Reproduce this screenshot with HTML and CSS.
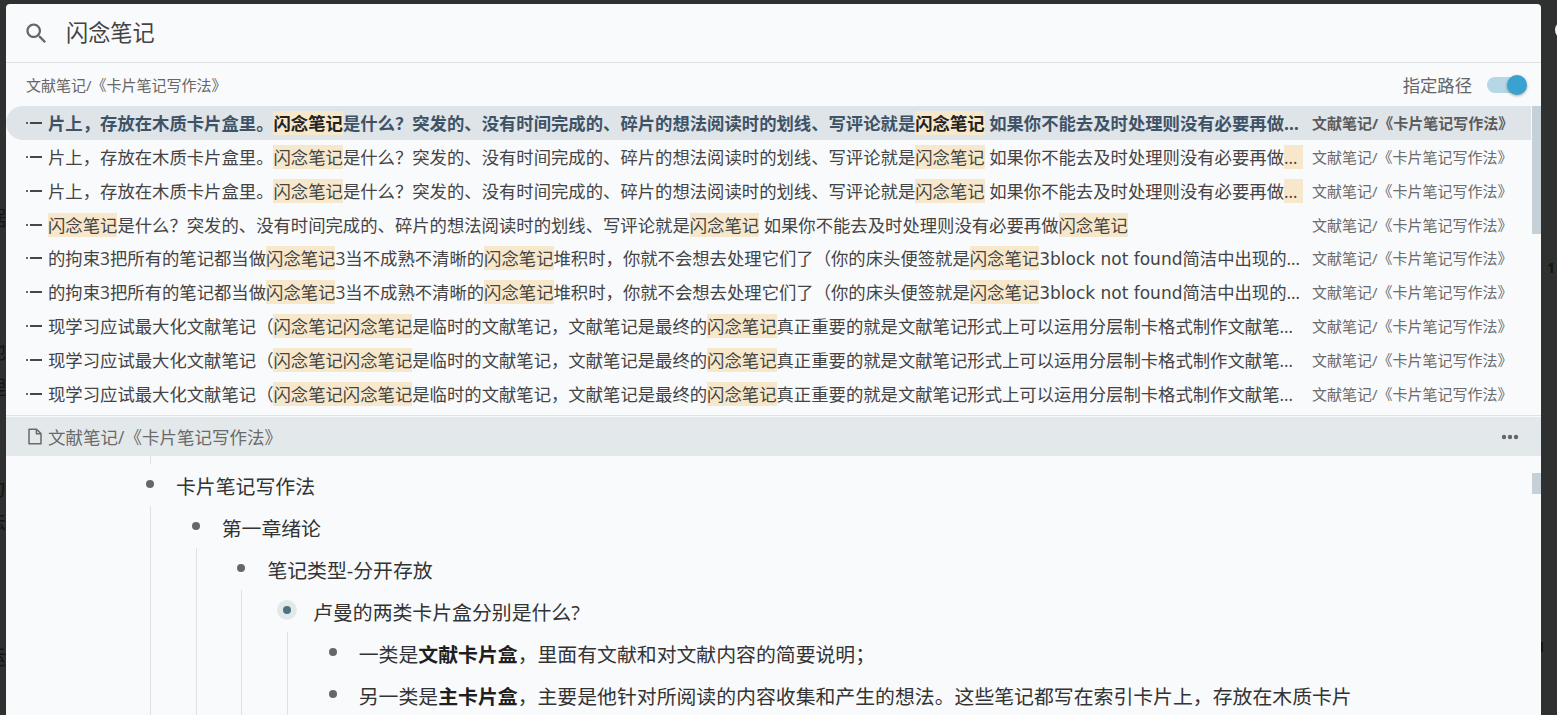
FILE: index.html
```html
<!DOCTYPE html>
<html lang="zh-CN">
<head>
<meta charset="utf-8">
<title>闪念笔记</title>
<link rel="stylesheet" href="styles.css">
</head>
<body>
<div class="backdrop" aria-hidden="true">
  <span class="bg-glyph g1">据</span>
  <span class="bg-glyph g2">他</span>
  <span class="bg-glyph g3">理</span>
  <span class="bg-glyph g4">力</span>
  <span class="bg-glyph g5">法</span>
  <span class="bg-glyph g6">运</span>
  <span class="bg-one">1</span>
  <span class="bg-block"></span>
  <span class="bg-circle"></span>
</div>
<main class="dialog">
  <header class="search">
    <svg class="search-icon" viewBox="0 0 24 24"><path d="M15.5 14h-.79l-.28-.27C15.41 12.59 16 11.11 16 9.5 16 5.91 13.09 3 9.5 3S3 5.91 3 9.5 5.91 16 9.5 16c1.61 0 3.09-.59 4.23-1.57l.27.28v.79l5 4.99L20.49 19l-4.99-5zm-6 0C7.01 14 5 11.99 5 9.5S7.01 5 9.5 5 14 7.01 14 9.5 11.99 14 9.5 14z"/></svg>
    <div class="search-input">闪念笔记</div>
  </header>

  <div class="filter">
    <span class="filter-path">文献笔记/《卡片笔记写作法》</span>
    <span class="filter-label">指定路径</span>
    <span class="switch"><span class="switch-knob"></span></span>
  </div>

  <div class="results">
    <ul class="list">
      <li class="item is-focus">
        <svg class="item-icon" viewBox="0 0 16 8"><circle cx="1" cy="4" r="1"/><rect x="4" y="3.1" width="12" height="1.8"/></svg>
        <span class="item-text">片上，存放在木质卡片盒里。<mark>闪念笔记</mark>是什么？突发的、没有时间完成的、碎片的想法阅读时的划线、写评论就是<mark>闪念笔记</mark> 如果你不能去及时处理则没有必要再做闪念笔记</span>
        <span class="item-path">文献笔记/《卡片笔记写作法》</span>
      </li>
      <li class="item">
        <svg class="item-icon" viewBox="0 0 16 8"><circle cx="1" cy="4" r="1"/><rect x="4" y="3.1" width="12" height="1.8"/></svg>
        <span class="item-text">片上，存放在木质卡片盒里。<mark>闪念笔记</mark>是什么？突发的、没有时间完成的、碎片的想法阅读时的划线、写评论就是<mark>闪念笔记</mark> 如果你不能去及时处理则没有必要再做<mark>闪念笔记</mark></span>
        <span class="item-path">文献笔记/《卡片笔记写作法》</span>
      </li>
      <li class="item">
        <svg class="item-icon" viewBox="0 0 16 8"><circle cx="1" cy="4" r="1"/><rect x="4" y="3.1" width="12" height="1.8"/></svg>
        <span class="item-text">片上，存放在木质卡片盒里。<mark>闪念笔记</mark>是什么？突发的、没有时间完成的、碎片的想法阅读时的划线、写评论就是<mark>闪念笔记</mark> 如果你不能去及时处理则没有必要再做<mark>闪念笔记</mark></span>
        <span class="item-path">文献笔记/《卡片笔记写作法》</span>
      </li>
      <li class="item">
        <svg class="item-icon" viewBox="0 0 16 8"><circle cx="1" cy="4" r="1"/><rect x="4" y="3.1" width="12" height="1.8"/></svg>
        <span class="item-text"><mark>闪念笔记</mark>是什么？突发的、没有时间完成的、碎片的想法阅读时的划线、写评论就是<mark>闪念笔记</mark> 如果你不能去及时处理则没有必要再做<mark>闪念笔记</mark></span>
        <span class="item-path">文献笔记/《卡片笔记写作法》</span>
      </li>
      <li class="item">
        <svg class="item-icon" viewBox="0 0 16 8"><circle cx="1" cy="4" r="1"/><rect x="4" y="3.1" width="12" height="1.8"/></svg>
        <span class="item-text">的拘束3把所有的笔记都当做<mark>闪念笔记</mark>3当不成熟不清晰的<mark>闪念笔记</mark>堆积时，你就不会想去处理它们了（你的床头便签就是<mark>闪念笔记</mark><span class="latin">3block not found</span>简洁中出现的问题和想法</span>
        <span class="item-path">文献笔记/《卡片笔记写作法》</span>
      </li>
      <li class="item">
        <svg class="item-icon" viewBox="0 0 16 8"><circle cx="1" cy="4" r="1"/><rect x="4" y="3.1" width="12" height="1.8"/></svg>
        <span class="item-text">的拘束3把所有的笔记都当做<mark>闪念笔记</mark>3当不成熟不清晰的<mark>闪念笔记</mark>堆积时，你就不会想去处理它们了（你的床头便签就是<mark>闪念笔记</mark><span class="latin">3block not found</span>简洁中出现的问题和想法</span>
        <span class="item-path">文献笔记/《卡片笔记写作法》</span>
      </li>
      <li class="item">
        <svg class="item-icon" viewBox="0 0 16 8"><circle cx="1" cy="4" r="1"/><rect x="4" y="3.1" width="12" height="1.8"/></svg>
        <span class="item-text">现学习应试最大化文献笔记（<mark>闪念笔记闪念笔记</mark>是临时的文献笔记，文献笔记是最终的<mark>闪念笔记</mark>真正重要的就是文献笔记形式上可以运用分层制卡格式制作文献笔记内容</span>
        <span class="item-path">文献笔记/《卡片笔记写作法》</span>
      </li>
      <li class="item">
        <svg class="item-icon" viewBox="0 0 16 8"><circle cx="1" cy="4" r="1"/><rect x="4" y="3.1" width="12" height="1.8"/></svg>
        <span class="item-text">现学习应试最大化文献笔记（<mark>闪念笔记闪念笔记</mark>是临时的文献笔记，文献笔记是最终的<mark>闪念笔记</mark>真正重要的就是文献笔记形式上可以运用分层制卡格式制作文献笔记内容</span>
        <span class="item-path">文献笔记/《卡片笔记写作法》</span>
      </li>
      <li class="item">
        <svg class="item-icon" viewBox="0 0 16 8"><circle cx="1" cy="4" r="1"/><rect x="4" y="3.1" width="12" height="1.8"/></svg>
        <span class="item-text">现学习应试最大化文献笔记（<mark>闪念笔记闪念笔记</mark>是临时的文献笔记，文献笔记是最终的<mark>闪念笔记</mark>真正重要的就是文献笔记形式上可以运用分层制卡格式制作文献笔记内容</span>
        <span class="item-path">文献笔记/《卡片笔记写作法》</span>
      </li>
    </ul>
    <span class="scrollbar scrollbar-list"></span>
  </div>

  <div class="doc-bar">
    <svg class="doc-icon" viewBox="0 0 14 17"><path d="M1 1.2h7.6L13 5.6v10.2H1z M8.4 1.2v4.6H13" fill="none" stroke="currentColor" stroke-width="1.5" stroke-linejoin="round"/></svg>
    <span class="doc-title">文献笔记/《卡片笔记写作法》</span>
    <svg class="doc-more" viewBox="0 0 18 6"><circle cx="3" cy="3" r="2.2"/><circle cx="9" cy="3" r="2.2"/><circle cx="15" cy="3" r="2.2"/></svg>
  </div>

  <div class="editor">
    <span class="scrollbar scrollbar-editor"></span>
    <div class="stub"></div>
    <div class="node">
      <div class="row"><span class="bullet"></span><p class="row-text">卡片笔记写作法</p></div>
      <div class="children">
        <div class="node">
          <div class="row"><span class="bullet"></span><p class="row-text">第一章绪论</p></div>
          <div class="children">
            <div class="node">
              <div class="row"><span class="bullet"></span><p class="row-text">笔记类型-分开存放</p></div>
              <div class="children">
                <div class="node">
                  <div class="row"><span class="bullet is-active"></span><p class="row-text">卢曼的两类卡片盒分别是什么?</p></div>
                  <div class="children">
                    <div class="node">
                      <div class="row"><span class="bullet"></span><p class="row-text">一类是<strong>文献卡片盒</strong>，里面有文献和对文献内容的简要说明；</p></div>
                    </div>
                    <div class="node">
                      <div class="row"><span class="bullet"></span><p class="row-text">另一类是<strong>主卡片盒</strong>，主要是他针对所阅读的内容收集和产生的想法。这些笔记都写在索引卡片上，存放在木质卡片盒里。</p></div>
                    </div>
                  </div>
                </div>
              </div>
            </div>
          </div>
        </div>
      </div>
    </div>
  </div>
</main>
</body>
</html>
```

FILE: styles.css
```css
* { box-sizing: border-box; }

html, body {
  height: 100%;
  margin: 0;
  overflow: hidden;
}

body {
  background: #2f3130;
  font-family: "Open Sans", "Noto Sans CJK SC", sans-serif;
  color: #333;
  padding: 4px 16px 0 6px;
}

.backdrop {
  position: absolute;
  inset: 0;
  overflow: hidden;
}

.bg-glyph {
  position: absolute;
  left: -14px;
  font-size: 20px;
  line-height: 24px;
  color: #161616;
}
.g1 { top: 207px; }
.g2 { top: 340px; }
.g3 { top: 376px; }
.g4 { top: 477px; }
.g5 { top: 510px; }
.g6 { top: 646px; }

.bg-one {
  position: absolute;
  left: 1547px;
  top: 259px;
  font-size: 14px;
  line-height: 18px;
  font-weight: 700;
  color: #161616;
}

.bg-block {
  position: absolute;
  left: 1541px;
  top: 642px;
  width: 2px;
  height: 10px;
  background: #161616;
}

.bg-circle {
  position: absolute;
  left: 1555px;
  top: 21px;
  width: 18px;
  height: 18px;
  border-radius: 50%;
  background: #f2f2f2;
}

.dialog {
  position: relative;
  display: flex;
  flex-direction: column;
  height: 711px;
  background: #f9fafc;
  border-radius: 4px 4px 0 0;
  overflow: hidden;
}

/* search */
.search {
  display: flex;
  align-items: center;
  height: 59px;
  padding-left: 17px;
  border-bottom: 1px solid #e0e2e6;
  flex: none;
}
.search-icon {
  width: 27px;
  height: 27px;
  fill: #666;
  flex: none;
}
.search-input {
  margin-left: 16px;
  font-size: 22.2px;
  line-height: 30px;
  color: #444;
}

/* filter */
.filter {
  display: flex;
  align-items: center;
  height: 43px;
  padding: 0 18px 0 20px;
  flex: none;
}
.filter-path {
  font-size: 15px;
  color: #666;
  flex: 1;
}
.filter-label {
  font-size: 17.33px;
  color: #666;
  margin-right: 15px;
}
.switch {
  position: relative;
  display: block;
  width: 36px;
  height: 16px;
  border-radius: 8px;
  background: #b5d7e6;
}
.switch-knob {
  position: absolute;
  right: -4px;
  top: -2px;
  width: 20px;
  height: 20px;
  border-radius: 50%;
  background: #3ba1d1;
  box-shadow: 0 1px 3px rgba(0, 0, 0, .35);
}

/* results */
.results {
  position: relative;
  flex: none;
  height: 310px;
  border-bottom: 1px solid #e0e2e6;
  overflow: hidden;
}
.list {
  list-style: none;
  margin: 0;
  padding: 0 10px 0 0;
}
.item {
  display: flex;
  align-items: center;
  height: 33.875px;
  padding: 0 19px 0 20px;
  font-size: 17.35px;
  line-height: 24px;
  color: #444;
}
.item.is-focus {
  background: #dee4e8;
  border-radius: 17px 0 0 17px;
  color: #3f5367;
  font-weight: 700;
}
.item-icon {
  width: 16px;
  height: 8px;
  flex: none;
  fill: #333;
  margin-right: 6px;
}
.item-text {
  flex: 1;
  min-width: 0;
  white-space: nowrap;
  overflow: hidden;
  text-overflow: ellipsis;
}
.latin {
  font-family: "DejaVu Sans", sans-serif;
  font-size: 17px;
}
.item-path {
  flex: none;
  width: 200px;
  margin-left: 9px;
  font-size: 15px;
  color: #6b6b6b;
  white-space: nowrap;
}
.is-focus .item-path { color: #5b5b5b; }

mark {
  background: #f8e8cb;
  color: inherit;
}
.is-focus mark { color: #222; }

.scrollbar {
  position: absolute;
  right: 0;
  width: 9px;
  background: #c5d0d7;
}
.scrollbar-list { top: 0; height: 128px; }
.scrollbar-editor { top: 17px; height: 21px; }

/* doc bar */
.doc-bar {
  display: flex;
  align-items: center;
  flex: none;
  height: 39px;
  margin-top: 1px;
  padding: 0 22px;
  background: #e3e9eb;
  color: #6a6a6a;
}
.doc-icon {
  width: 14px;
  height: 17px;
  flex: none;
}
.doc-title {
  flex: 1;
  margin-left: 6px;
  font-size: 17.5px;
}
.doc-more {
  width: 18px;
  height: 6px;
  flex: none;
  fill: #666;
}

/* editor */
.editor {
  position: relative;
  flex: 1;
  min-height: 0;
  overflow: hidden;
  padding: 0 176px 0 144px;
}
.stub {
  height: 8px;
  border-left: 1px solid #dfe2e5;
}
.row {
  display: flex;
  align-items: flex-start;
  min-height: 42px;
  margin-left: -10px;
}
.bullet {
  position: relative;
  display: block;
  flex: none;
  width: 20px;
  height: 20px;
  margin-top: 10px;
  border-radius: 50%;
}
.bullet::after {
  content: "";
  position: absolute;
  left: 6px;
  top: 6px;
  width: 8px;
  height: 8px;
  border-radius: 50%;
  background: #64676c;
}
.bullet.is-active { background: #e3e9eb; }
.bullet.is-active::after { background: #4f7183; }
.row-text {
  margin: 8px 0 4px 16px;
  font-size: 19.87px;
  line-height: 30px;
  color: #333;
}
.row-text strong { color: #1f1f1f; }
.children {
  border-left: 1px solid #dfe2e5;
  padding-left: 44.7px;
}
```
